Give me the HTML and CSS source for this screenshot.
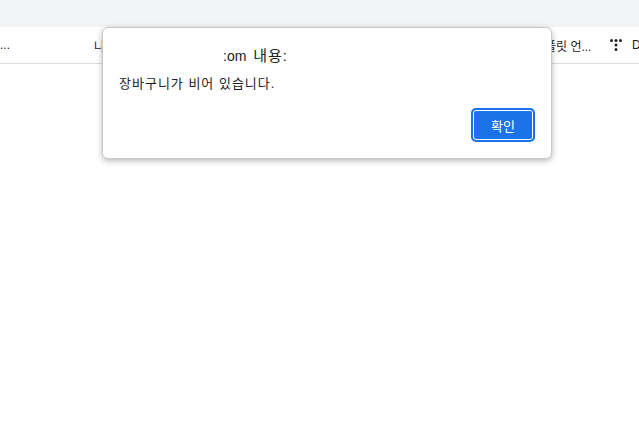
FILE: index.html
```html
<!DOCTYPE html>
<html lang="ko">
  <head>
    <meta charset="UTF-8" />
    <meta name="viewport" content="width=device-width, initial-scale=1.0" />
    <title>알림</title>
    <link rel="stylesheet" href="styles.css">
  </head>
  <body>
    <div class="topStrip"></div>
    <div class="bookmarks">
      <span class="mark markFirst">...</span>
      <span class="mark markSecond">나</span>
      <span class="mark markThird">플릿 언...</span>
      <svg class="dots" width="12" height="12" viewBox="0 0 12 12">
        <circle cx="1.5" cy="1.5" r="1.5" />
        <circle cx="6" cy="1.5" r="1.5" />
        <circle cx="10.5" cy="1.5" r="1.5" />
        <circle cx="6" cy="6" r="1.5" />
        <circle cx="6" cy="10.5" r="1.5" />
      </svg>
      <span class="mark">D</span>
    </div>

    <div class="dialog">
      <div class="dialogTitle">:om <span class="titleKo">내용:</span></div>
      <div class="dialogText">장바구니가 비어 있습니다.</div>
      <div class="dialogFoot">
        <button class="btn okBtn">확인</button>
      </div>
    </div>
  </body>
</html>
```

FILE: styles.css
```css
html,
body {
  margin: 0;
  height: 100%;
  overflow: hidden;
  background-color: #fff;
  font-family: "Liberation Sans", "Noto Sans CJK KR", sans-serif;
  color: #202124;
}
.topStrip {
  height: 27px;
  background-color: #f1f3f4;
}
.bookmarks {
  display: flex;
  align-items: center;
  height: 36px;
  border-bottom: 1px solid #dadce0;
  font-size: 12px;
  white-space: nowrap;
  overflow: hidden;
}
.mark {
  flex: none;
}
.markFirst {
  width: 94px;
}
.markSecond {
  width: 451px;
}
.markThird {
  width: 65px;
}
.dots {
  flex: none;
  margin-right: 10px;
  fill: #202124;
}
/* dialog floats over the page */
.dialog {
  position: absolute;
  top: 27px;
  left: 102px;
  box-sizing: border-box;
  width: 450px;
  height: 132px;
  padding: 19px 16px 16px;
  background-color: #fff;
  border: 1px solid #c8c9cb;
  border-radius: 6px;
  box-shadow: 0 2px 6px rgba(0, 0, 0, 0.28);
}
.dialogTitle {
  padding-left: 104px;
  font-size: 14px;
  line-height: 17px;
}
.titleKo {
  margin-left: 3px;
  font-size: 15px;
  letter-spacing: 0.9px;
}
.dialogText {
  margin-top: 10px;
  font-size: 13px;
  line-height: 17px;
  letter-spacing: 1px;
}
.dialogFoot {
  display: flex;
  justify-content: flex-end;
  margin-top: 16px;
}
.btn {
  box-sizing: border-box;
  width: 64px;
  height: 34px;
  background-color: #1a73e8;
  color: #fff;
  border: 2px solid #1a73e8;
  border-radius: 5px;
  box-shadow: inset 0 0 0 1px #fff;
  font-family: inherit;
  font-size: 13px;
  cursor: pointer;
}
```
